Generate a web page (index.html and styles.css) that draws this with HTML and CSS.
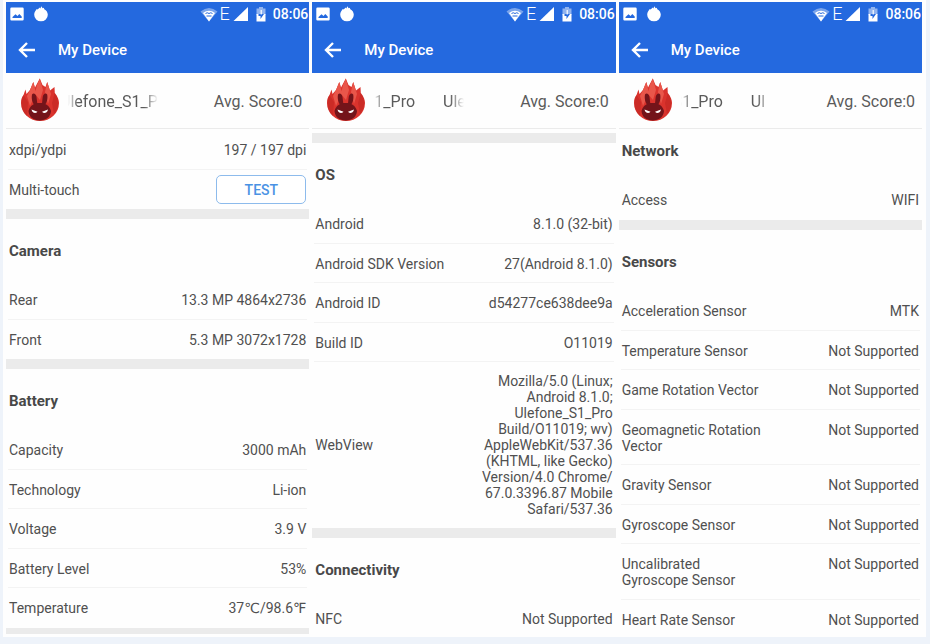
FILE: index.html
```html
<!DOCTYPE html>
<html lang="en">
<head>
<meta charset="utf-8">
<title>My Device</title>
<link rel="stylesheet" href="styles.css">
</head>
<body>
<svg class="defs" aria-hidden="true">
  <symbol id="i-image" viewBox="0 0 14 14"><path fill="#fff" fill-rule="evenodd" d="M1.5 0.500h11a1.200 1.200 0 0 1 1.200 1.200v10.600a1.200 1.200 0 0 1-1.200 1.200h-11a1.200 1.200 0 0 1-1.200-1.200V1.700A1.200 1.200 0 0 1 1.500.500zM2.500 11h9.200V9.500L9.300 7 7.500 9 5.500 7.300 2.500 10z"/></symbol>
  <symbol id="i-flame" viewBox="0 0 14 16"><path fill="#fff" d="M4.500 2.800 5.600 1.600 6.300 2.500 7.400.300 8.600 2.300 9.700 1.700 10.300 3.200C12.500 4.300 13.800 6.500 13.800 8.800a6.800 6.500 0 0 1-13.600 0C.200 7 .900 5.500 1.900 4.300L2.300 3.200 3.200 3.500z"/></symbol>
  <symbol id="i-wifi" viewBox="0 0 18 15"><path fill="#fff" opacity=".4" d="M.500 4.500Q9-2.500 17.500 4.500L9 14.500z"/><path fill="#fff" d="M3 6Q9 1.500 15 6L9 14.500z"/><path fill="none" stroke="#2469df" stroke-width="1" d="M5.500 6.500q1.700-1.500 3.500 0 1.800-1.500 3.500 0M6.500 9h5"/></symbol>
  <symbol id="i-signal" viewBox="0 0 16 14"><path fill="#fff" d="M15 0v14H.500z"/></symbol>
  <symbol id="i-battery" viewBox="0 0 10 15"><path fill="#fff" opacity=".5" d="M3 0h4v1.500h2.500V8H.500V1.500H3z"/><path fill="#fff" d="M.500 7h9v7.500h-9z"/><path fill="#2469df" d="M2.500 7h5.500L4.500 12V9H2.500z"/><path fill="#fff" opacity=".8" d="M4.500 3h1.500v4.500H4.500z"/></symbol>
  <symbol id="i-back" viewBox="0 0 18 16"><path fill="none" stroke="#fff" stroke-width="2.400" d="M17 8H2.500M9 1 2 8l7 7"/></symbol>
  <symbol id="i-logo" viewBox="0 0 40 44">
    <path fill="#da332d" d="M5.500 11.500 6.500 16 10 12 13.300 4 15 9.500 19.800.500 22.500 7 25.500 9 27.200 4 30 12.500 34.500 9 34.800 15C38 19 39 22 39 25a19 18 0 0 1-38 0C1 21 2 19 3.500 17z"/>
    <path fill="#e9564a" d="M13.300 4 16 15 10 28 7 18 10 12zM19.800.500 23 12 20 22 15 16 17 7zM27.200 4 31 16 28 26 25 14z"/>
    <path fill="#b9221f" opacity=".45" d="M3.500 17 8 24 7 38C1 33 0 23 3.500 17zM34.800 15 32 25l2 11c6-7 5-15 .800-21z"/>
    <path fill="#74141a" d="M15 27.500C12 25 11.300 20 12 16.500c1.500-2 4-.500 4.500 2.500l.800 6.500q2.500-.500 4.700 0L22.700 19c.500-3 3-4.500 4.500-2.500.700 3.500 0 8.500-3 11zM19.700 25C25.500 25 29.500 27.500 31 33c-.500 6-5 9.500-11.300 9.500S9 39 8.500 33C10 27.500 14 25 19.700 25z"/>
    <path fill="#fff" d="m11.500 31.500 6 2.200q-1.800 2-4.200.900Q11.800 33.500 11.500 31.500zM28 31.500l-6 2.200q1.800 2 4.200.900 1.500-1.100 1.800-3.100z"/>
  </symbol>
</svg>

<main class="sheet">
  <article class="screen">
    <header class="top">
      <div class="status">
        <svg class="s-image"><use href="#i-image"/></svg>
        <svg class="s-flame"><use href="#i-flame"/></svg>
        <svg class="s-wifi"><use href="#i-wifi"/></svg>
        <span class="net">E</span>
        <svg class="s-signal"><use href="#i-signal"/></svg>
        <svg class="s-battery"><use href="#i-battery"/></svg>
        <time class="clock">08:06</time>
      </div>
      <div class="appbar">
        <button class="back" aria-label="Back"><svg><use href="#i-back"/></svg></button>
        <h1>My Device</h1>
      </div>
    </header>
    <div class="device">
      <svg class="logo"><use href="#i-logo"/></svg>
      <div class="marquee marquee-start"><span>Ulefone_S1_P</span></div>
      <span class="score">Avg. Score:0</span>
    </div>
    <div class="list list-rows">
      <dl>
        <div class="row"><dt>xdpi/ydpi</dt><dd>197 / 197 dpi</dd></div>
        <div class="row row-action"><dt>Multi-touch</dt><dd><button class="test">TEST</button></dd></div>
      </dl>
      <section>
        <h2>Camera</h2>
        <dl>
          <div class="row"><dt>Rear</dt><dd>13.3 MP 4864x2736</dd></div>
          <div class="row"><dt>Front</dt><dd>5.3 MP 3072x1728</dd></div>
        </dl>
      </section>
      <section class="closing">
        <h2>Battery</h2>
        <dl>
          <div class="row"><dt>Capacity</dt><dd>3000 mAh</dd></div>
          <div class="row"><dt>Technology</dt><dd>Li-ion</dd></div>
          <div class="row"><dt>Voltage</dt><dd>3.9 V</dd></div>
          <div class="row"><dt>Battery Level</dt><dd>53%</dd></div>
          <div class="row"><dt>Temperature</dt><dd>37℃/98.6℉</dd></div>
        </dl>
      </section>
    </div>
  </article>

  <article class="screen">
    <header class="top">
      <div class="status">
        <svg class="s-image"><use href="#i-image"/></svg>
        <svg class="s-flame"><use href="#i-flame"/></svg>
        <svg class="s-wifi"><use href="#i-wifi"/></svg>
        <span class="net">E</span>
        <svg class="s-signal"><use href="#i-signal"/></svg>
        <svg class="s-battery"><use href="#i-battery"/></svg>
        <time class="clock">08:06</time>
      </div>
      <div class="appbar">
        <button class="back" aria-label="Back"><svg><use href="#i-back"/></svg></button>
        <h1>My Device</h1>
      </div>
    </header>
    <div class="device">
      <svg class="logo"><use href="#i-logo"/></svg>
      <div class="marquee"><span>1_Pro</span><span>Ule</span></div>
      <span class="score">Avg. Score:0</span>
    </div>
    <div class="list list-gap">
      <section>
        <h2>OS</h2>
        <dl>
          <div class="row"><dt>Android</dt><dd>8.1.0 (32-bit)</dd></div>
          <div class="row"><dt>Android SDK Version</dt><dd>27(Android 8.1.0)</dd></div>
          <div class="row"><dt>Android ID</dt><dd>d54277ce638dee9a</dd></div>
          <div class="row"><dt>Build ID</dt><dd>O11019</dd></div>
          <div class="row row-long"><dt>WebView</dt><dd>Mozilla/5.0 (Linux; Android 8.1.0; Ulefone_S1_Pro Build/O11019; wv) AppleWebKit/537.36 (KHTML, like Gecko) Version/4.0 Chrome/<wbr>67.0.3396.87 Mobile Safari/537.36</dd></div>
        </dl>
      </section>
      <section>
        <h2>Connectivity</h2>
        <dl>
          <div class="row row-cut"><dt>NFC</dt><dd>Not Supported</dd></div>
        </dl>
      </section>
    </div>
  </article>

  <article class="screen">
    <header class="top">
      <div class="status">
        <svg class="s-image"><use href="#i-image"/></svg>
        <svg class="s-flame"><use href="#i-flame"/></svg>
        <svg class="s-wifi"><use href="#i-wifi"/></svg>
        <span class="net">E</span>
        <svg class="s-signal"><use href="#i-signal"/></svg>
        <svg class="s-battery"><use href="#i-battery"/></svg>
        <time class="clock">08:06</time>
      </div>
      <div class="appbar">
        <button class="back" aria-label="Back"><svg><use href="#i-back"/></svg></button>
        <h1>My Device</h1>
      </div>
    </header>
    <div class="device">
      <svg class="logo"><use href="#i-logo"/></svg>
      <div class="marquee marquee-start"><span>S1_Pro</span><span>Ul</span></div>
      <span class="score">Avg. Score:0</span>
    </div>
    <div class="list">
      <section class="opening">
        <h2>Network</h2>
        <dl>
          <div class="row"><dt>Access</dt><dd>WIFI</dd></div>
        </dl>
      </section>
      <section>
        <h2>Sensors</h2>
        <dl>
          <div class="row"><dt>Acceleration Sensor</dt><dd>MTK</dd></div>
          <div class="row"><dt>Temperature Sensor</dt><dd>Not Supported</dd></div>
          <div class="row"><dt>Game Rotation Vector</dt><dd>Not Supported</dd></div>
          <div class="row"><dt>Geomagnetic Rotation Vector</dt><dd>Not Supported</dd></div>
          <div class="row"><dt>Gravity Sensor</dt><dd>Not Supported</dd></div>
          <div class="row"><dt>Gyroscope Sensor</dt><dd>Not Supported</dd></div>
          <div class="row"><dt>Uncalibrated Gyroscope Sensor</dt><dd>Not Supported</dd></div>
          <div class="row row-cut"><dt>Heart Rate Sensor</dt><dd>Not Supported</dd></div>
        </dl>
      </section>
    </div>
  </article>
</main>
</body>
</html>
```
FILE: styles.css
```css
* { box-sizing: border-box; }

body {
  margin: 0;
  background: #eef3fa;
  color: #505050;
  font: 14px/16px Roboto, "Liberation Sans", "DejaVu Sans", sans-serif;
}

h1, h2, dl, dd { margin: 0; }
button { font: inherit; cursor: pointer; }
svg { display: block; flex: none; }
.defs { display: none; }

.sheet {
  display: grid;
  grid-template-columns: repeat(3, minmax(0, 1fr));
  gap: 3px;
  margin: 0 4px 0 3px;
  padding: 2px 4px 1px 3px;
  background: #fefefe;
}

/* Status bar and app bar */
.top {
  background: #2469df;
  color: #fff;
  height: 71px;
}

.status {
  display: flex;
  align-items: center;
  height: 24px;
  padding: 0 1px 0 4px;
}

.s-image { width: 14px; height: 14px; margin-right: 10px; }
.s-flame { width: 14px; height: 16px; margin-right: auto; }
.s-wifi { width: 18px; height: 15px; margin-right: 2px; }
.net { font-size: 18px; font-weight: 300; margin-right: 3px; }
.s-signal { width: 16px; height: 14px; margin-right: 7px; }
.s-battery { width: 10px; height: 15px; margin-right: 7px; }
.clock { font-size: 14px; font-weight: 500; }

.appbar {
  display: flex;
  align-items: center;
  gap: 22px;
  height: 47px;
  padding: 0 12px;
}

.back {
  padding: 0;
  border: 0;
  background: none;
}
.back svg { width: 18px; height: 16px; }

h1 { font-size: 15px; font-weight: 500; }

/* Device summary */
.device {
  display: flex;
  align-items: center;
  height: 56px;
  padding: 2px 7px 0 14px;
  border-bottom: 1px solid #ebebeb;
  color: #5a5a5a;
  font-size: 16px;
  line-height: 20px;
}

.logo { width: 40px; height: 44px; margin-bottom: 3px; }

.marquee {
  display: flex;
  gap: 28px;
  width: 90px;
  margin: 0 auto 0 8px;
  overflow: hidden;
  white-space: nowrap;
  mask-image: linear-gradient(to right, transparent, #000 10px, #000 76px, transparent);
}
.marquee-start span:first-child { margin-left: -8px; }

/* Property list */
.list-rows { padding-top: 1px; }
.list-gap { padding-top: 4px; }

section { border-top: 10px solid #ebebeb; }
.opening { border-top: 0; }
.closing { border-bottom: 6px solid #ebebeb; }

h2 {
  padding: 24px 3px 21px;
  font-size: 15px;
  line-height: 16px;
  font-weight: 700;
  color: #484848;
}
.opening h2 { padding-top: 14px; }

.row {
  display: flex;
  justify-content: space-between;
  padding: 12px 3px;
  background: linear-gradient(#f3f3f3, #f3f3f3) bottom / calc(100% - 4px) 1px no-repeat;
}
.row:nth-child(even) { padding-bottom: 11px; }
.row:last-child { background: none; }

dt { max-width: 142px; }
dd { max-width: 136px; text-align: right; }

.row.row-long {
  align-items: center;
  padding-block: 11px;
}
.row.row-action {
  align-items: center;
  padding-block: 5px;
}
.row.row-cut { padding-bottom: 8px; }

.test {
  display: block;
  width: 90px;
  height: 29px;
  padding: 0;
  border: 1px solid #8dbbec;
  border-radius: 5px;
  background: #fff;
  color: #4a92e4;
  font-weight: 500;
}
```
